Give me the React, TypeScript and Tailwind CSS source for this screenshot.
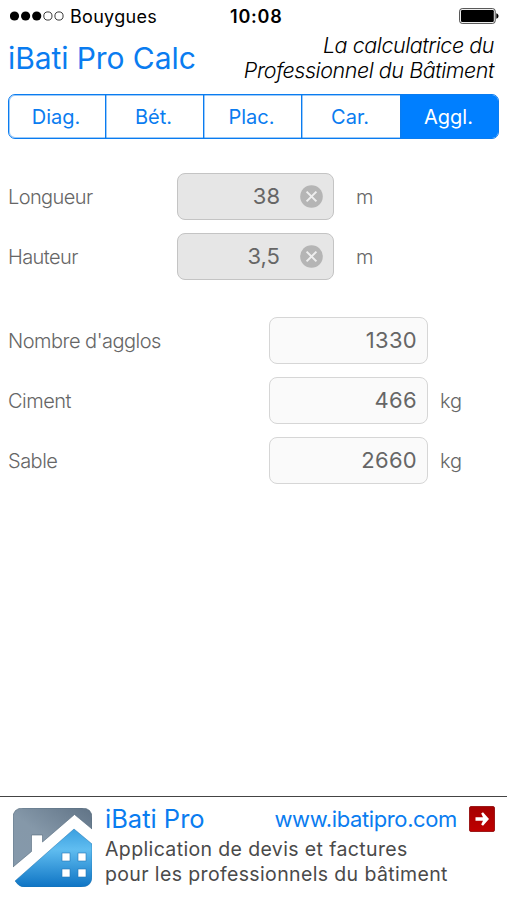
const tabs = ['Diag.', 'Bét.', 'Plac.', 'Car.', 'Aggl.'];

const inputs = [
  { label: 'Longueur', value: '38', unit: 'm' },
  { label: 'Hauteur', value: '3,5', unit: 'm' },
];

const results = [
  { label: "Nombre d'agglos", value: '1330', unit: '' },
  { label: 'Ciment', value: '466', unit: 'kg' },
  { label: 'Sable', value: '2660', unit: 'kg' },
];

function StatusBar() {
  return (
    <div className="flex h-8 items-center text-black">
      <div className="flex w-[230px] items-center pl-[10px]">
        <svg width="54" height="10" viewBox="0 0 54 10">
          {[4.5, 15.6, 26.7].map((cx) => (
            <circle key={cx} cx={cx} cy="5" r="4.6" fill="#000" />
          ))}
          {[37.9, 49].map((cx) => (
            <circle key={cx} cx={cx} cy="5" r="4.1" fill="none" stroke="#222" strokeWidth="0.9" />
          ))}
        </svg>
        <span className="ml-[6px] text-[18px] tracking-[0.3px]">Bouygues</span>
      </div>
      <span className="pt-[1px] text-[18px] font-semibold tracking-[0.8px]">10:08</span>
      <div className="flex flex-1 justify-end pr-[8px]">
        <svg width="40" height="16" viewBox="0 0 40 16">
          <rect x="0.6" y="0.6" width="35.6" height="14.8" rx="2.6" fill="none" stroke="#333" strokeWidth="0.9" />
          <rect x="2" y="2" width="32.8" height="12" rx="1.2" fill="#000" />
          <path d="M37.3 5.2c1.6.5 2.2 1.6 2.2 2.8s-.6 2.3-2.2 2.8z" fill="#000" />
        </svg>
      </div>
    </div>
  );
}

function Header() {
  return (
    <header className="flex h-[62px] justify-between pr-[13px] pl-2">
      <h1 className="pt-[6px] text-[30px] leading-[40px] tracking-[-0.08px] whitespace-nowrap text-[#0a7cf0]">
        iBati Pro Calc
      </h1>
      <p className="pt-[1px] text-right text-[21.5px] leading-[25px] font-light tracking-[-0.45px] whitespace-nowrap text-black italic">
        La calculatrice du
        <br />
        Professionnel du Bâtiment
      </p>
    </header>
  );
}

function ClearIcon() {
  return (
    <svg width="23" height="23" viewBox="0 0 23 23">
      <circle cx="11.5" cy="11.5" r="11.3" fill="#b5b5b5" />
      <path d="M6.6 6.6l9.8 9.8M16.4 6.6l-9.8 9.8" stroke="#eee" strokeWidth="2" />
    </svg>
  );
}

function HouseLogo() {
  return (
    <svg width="79" height="79" viewBox="0 0 79 79">
      <defs>
        <linearGradient id="sky" x1="0" y1="1" x2="1" y2="0">
          <stop offset="0" stopColor="#8599ab" />
          <stop offset="0.45" stopColor="#8598a9" />
          <stop offset="1" stopColor="#607386" />
        </linearGradient>
        <linearGradient id="wall" x1="0" y1="0" x2="0" y2="1">
          <stop offset="0" stopColor="#3a9fe0" />
          <stop offset="0.35" stopColor="#60bdf0" />
          <stop offset="1" stopColor="#0e74c4" />
        </linearGradient>
      </defs>
      <path
        d="M0 59V10Q0 0 10 0H69Q79 0 79 10V21L61.5 6.5L29.5 34V27H18.5V43.5Z"
        fill="url(#sky)"
        stroke="#53687b"
        strokeWidth="0.6"
      />
      <path
        d="M61 21L79 36V68Q79 79 68 79H11Q6 79 2 73Z"
        fill="url(#wall)"
        stroke="#1b70ae"
        strokeWidth="0.5"
      />
      {[49, 65].map((x) =>
        [45, 61].map((y) => (
          <rect key={`${x}-${y}`} x={x} y={y} width="8" height="8" fill="#fff" stroke="#2376b5" strokeWidth="0.6" />
        )),
      )}
    </svg>
  );
}

function Footer() {
  return (
    <footer className="flex h-[104px] border-t border-[#444] pt-[11px] pl-[13px]">
      <HouseLogo />
      <div className="ml-[13px] w-[390px]">
        <div className="mt-[-3px] flex h-[28px] items-center whitespace-nowrap text-[#0a7cf0]">
          <span className="flex-1 text-[25.5px]">iBati Pro</span>
          <span className="text-[22px] tracking-[-0.38px]">www.ibatipro.com</span>
          <svg className="ml-[12px]" width="26" height="26" viewBox="0 0 26 26">
            <defs>
              <linearGradient id="go" x1="0" y1="0" x2="0" y2="1">
                <stop offset="0" stopColor="#a50000" />
                <stop offset="1" stopColor="#bf0000" />
              </linearGradient>
            </defs>
            <rect x="0.5" y="0.5" width="25" height="25" rx="1.5" fill="url(#go)" stroke="#8d0000" strokeWidth="0.8" />
            <path d="M6.5 11.2H14L12.2 7.6L14 6.2L20 13L14 19.8L12.2 18.4L14 14.8H6.5Z" fill="#fff" />
          </svg>
        </div>
        <p className="mt-[4px] text-[19.5px] leading-[25px] tracking-[0.37px] whitespace-nowrap text-[#4a4a4a]">
          Application de devis et factures
          <br />
          pour les professionnels du bâtiment
        </p>
      </div>
    </footer>
  );
}

export default function App() {
  return (
    <div className="flex h-[900px] w-[507px] flex-col overflow-hidden bg-white font-['Inter','Liberation_Sans',sans-serif]">
      <StatusBar />
      <Header />

      <nav className="mx-2 grid h-[45px] shrink-0 grid-cols-[96px_98px_98px_99px_1fr] overflow-hidden rounded-[7px] border border-[#0a7cf0] shadow-[inset_0_0_0_1px_#0a7cf066]">
        {tabs.map((tab, i) => (
          <button
            key={tab}
            className={`pr-[2px] text-[20px] ${i === tabs.length - 1 ? 'bg-[#007fff] text-white' : 'text-[#0a7cf0]'} ${
              i > 0 ? 'border-l border-[#0a7cf0] shadow-[inset_1px_0_0_#0a7cf066]' : ''
            }`}
          >
            {tab}
          </button>
        ))}
      </nav>

      <main className="flex-1 pl-2 text-[#666]">
        <div className="mt-[34px] flex flex-col gap-[13px]">
          {inputs.map((row) => (
            <div key={row.label} className="flex h-[47px] items-center">
              <span className="w-[169px] text-[20px] font-light tracking-[-0.6px]">{row.label}</span>
              <div className="flex h-full w-[157px] items-center justify-end rounded-[8px] border border-[#c4c4c4] bg-[#e6e6e6] pr-[10px]">
                <span className="mr-[20px] text-[22px] text-[#666]">{row.value}</span>
                <ClearIcon />
              </div>
              <span className="ml-[22px] text-[20px] font-light">{row.unit}</span>
            </div>
          ))}
        </div>

        <div className="mt-[37px] flex flex-col gap-[13px]">
          {results.map((row) => (
            <div key={row.label} className="flex h-[47px] items-center">
              <span className="w-[261px] text-[20px] font-light tracking-[-0.5px]">{row.label}</span>
              <div className="flex h-full w-[159px] items-center justify-end rounded-[8px] border border-[#d6d6d6] bg-[#fafafa] pr-[10px]">
                <span className="text-[22px] tracking-[0.3px] text-[#666]">{row.value}</span>
              </div>
              <span className="ml-[12px] text-[20px] font-light">{row.unit}</span>
            </div>
          ))}
        </div>
      </main>

      <Footer />
    </div>
  );
}
